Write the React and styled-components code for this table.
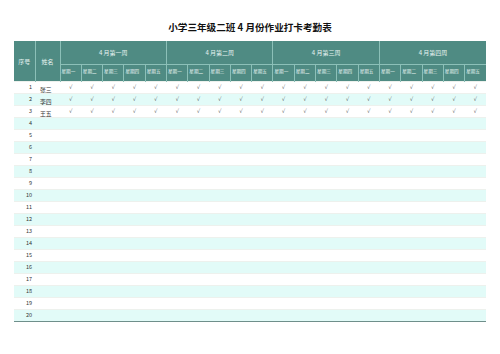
import React from 'react';
import styled, { createGlobalStyle } from 'styled-components';

const GlobalStyle = createGlobalStyle`
    html, body {
        margin: 0;
        padding: 0;
        background: #ffffff;
    }
    body {
        font-family: "Noto Sans CJK SC", "Noto Sans", sans-serif;
    }
`;

const weeks = ['4 月第一周', '4 月第二周', '4 月第三周', '4 月第四周'];
const days = ['星期一', '星期二', '星期三', '星期四', '星期五'];
const names = ['张三', '李四', '王五'];
const rows = Array.from({ length: 20 }, (_, i) => i + 1);

export default function App() {
    return (
        <Page>
            <GlobalStyle />
            <Title>小学三年级二班 4 月份作业打卡考勤表</Title>
            <Table>
                <colgroup>
                    <col style={{ width: 21 }} />
                    <col style={{ width: 25 }} />
                    {weeks.map((w) => days.map((d) => <col key={w + d} />))}
                </colgroup>
                <thead>
                    <tr>
                        <HeadCell rowSpan={2}>序号</HeadCell>
                        <HeadCell rowSpan={2}>姓名</HeadCell>
                        {weeks.map((w) => (
                            <WeekCell key={w} colSpan={5}>{w}</WeekCell>
                        ))}
                    </tr>
                    <tr>
                        {weeks.map((w) => days.map((d) => (
                            <DayCell key={w + d}>{d}</DayCell>
                        )))}
                    </tr>
                </thead>
                <tbody>
                    {rows.map((n) => (
                        <Row key={n} $alt={n % 2 === 0}>
                            <NumCell>{n}</NumCell>
                            <NameCell>
                                <NameText>{names[n - 1] || ''}</NameText>
                            </NameCell>
                            {weeks.map((w) => days.map((d) => (
                                <CheckCell key={w + d}>{n <= 3 ? '√' : ''}</CheckCell>
                            )))}
                        </Row>
                    ))}
                </tbody>
            </Table>
        </Page>
    );
}

const Page = styled.div`
    width: 500px;
    height: 354px;
    padding: 19px 14px 0 14px;
    box-sizing: border-box;
`;

const Title = styled.h1`
    margin: 0;
    height: 22px;
    line-height: 16px;
    text-align: center;
    font-size: 9.6px;
    font-weight: 700;
    color: #111111;
`;

const Table = styled.table`
    width: 472px;
    table-layout: fixed;
    border-collapse: collapse;
    border-bottom: 1.5px solid #6f8f8b;
`;

const HeadCell = styled.th`
    background: #4f8b83;
    color: #e8f4f2;
    font-size: 6px;
    font-weight: 400;
    padding: 0;
    border-right: 1px solid #8cc0b8;
    text-align: center;
`;

const WeekCell = styled.th`
    background: #4f8b83;
    color: #e8f4f2;
    font-size: 6px;
    font-weight: 400;
    height: 23px;
    padding: 0;
    border-left: 1px solid #8cc0b8;
    border-bottom: 1px solid #8cc0b8;
    text-align: center;
`;

const DayCell = styled.th`
    background: #4f8b83;
    color: #e8f4f2;
    font-size: 4.6px;
    font-weight: 400;
    height: 17px;
    padding: 0 0 5px 1px;
    box-sizing: border-box;
    border-left: 1px solid #8cc0b8;
    text-align: left;
    white-space: nowrap;
    overflow: hidden;
`;

const Row = styled.tr`
    background: ${(p) => (p.$alt ? '#e2fbf8' : '#ffffff')};
    border-top: 1px solid #edf1ed;
`;

const NumCell = styled.td`
    padding: 0 3px 0 0;
    height: 11px;
    font-size: 5.5px;
    color: #333333;
    text-align: right;
    line-height: 11px;
`;

const NameCell = styled.td`
    padding: 0 0 0 5px;
    height: 11px;
`;

const NameText = styled.div`
    height: 11px;
    font-size: 5.8px;
    line-height: 11px;
    padding-top: 2px;
    box-sizing: border-box;
    color: #333333;
`;

const CheckCell = styled.td`
    padding: 0;
    height: 11px;
    font-family: "DejaVu Sans", sans-serif;
    font-size: 5.5px;
    color: #555555;
    text-align: center;
    line-height: 11px;
`;
